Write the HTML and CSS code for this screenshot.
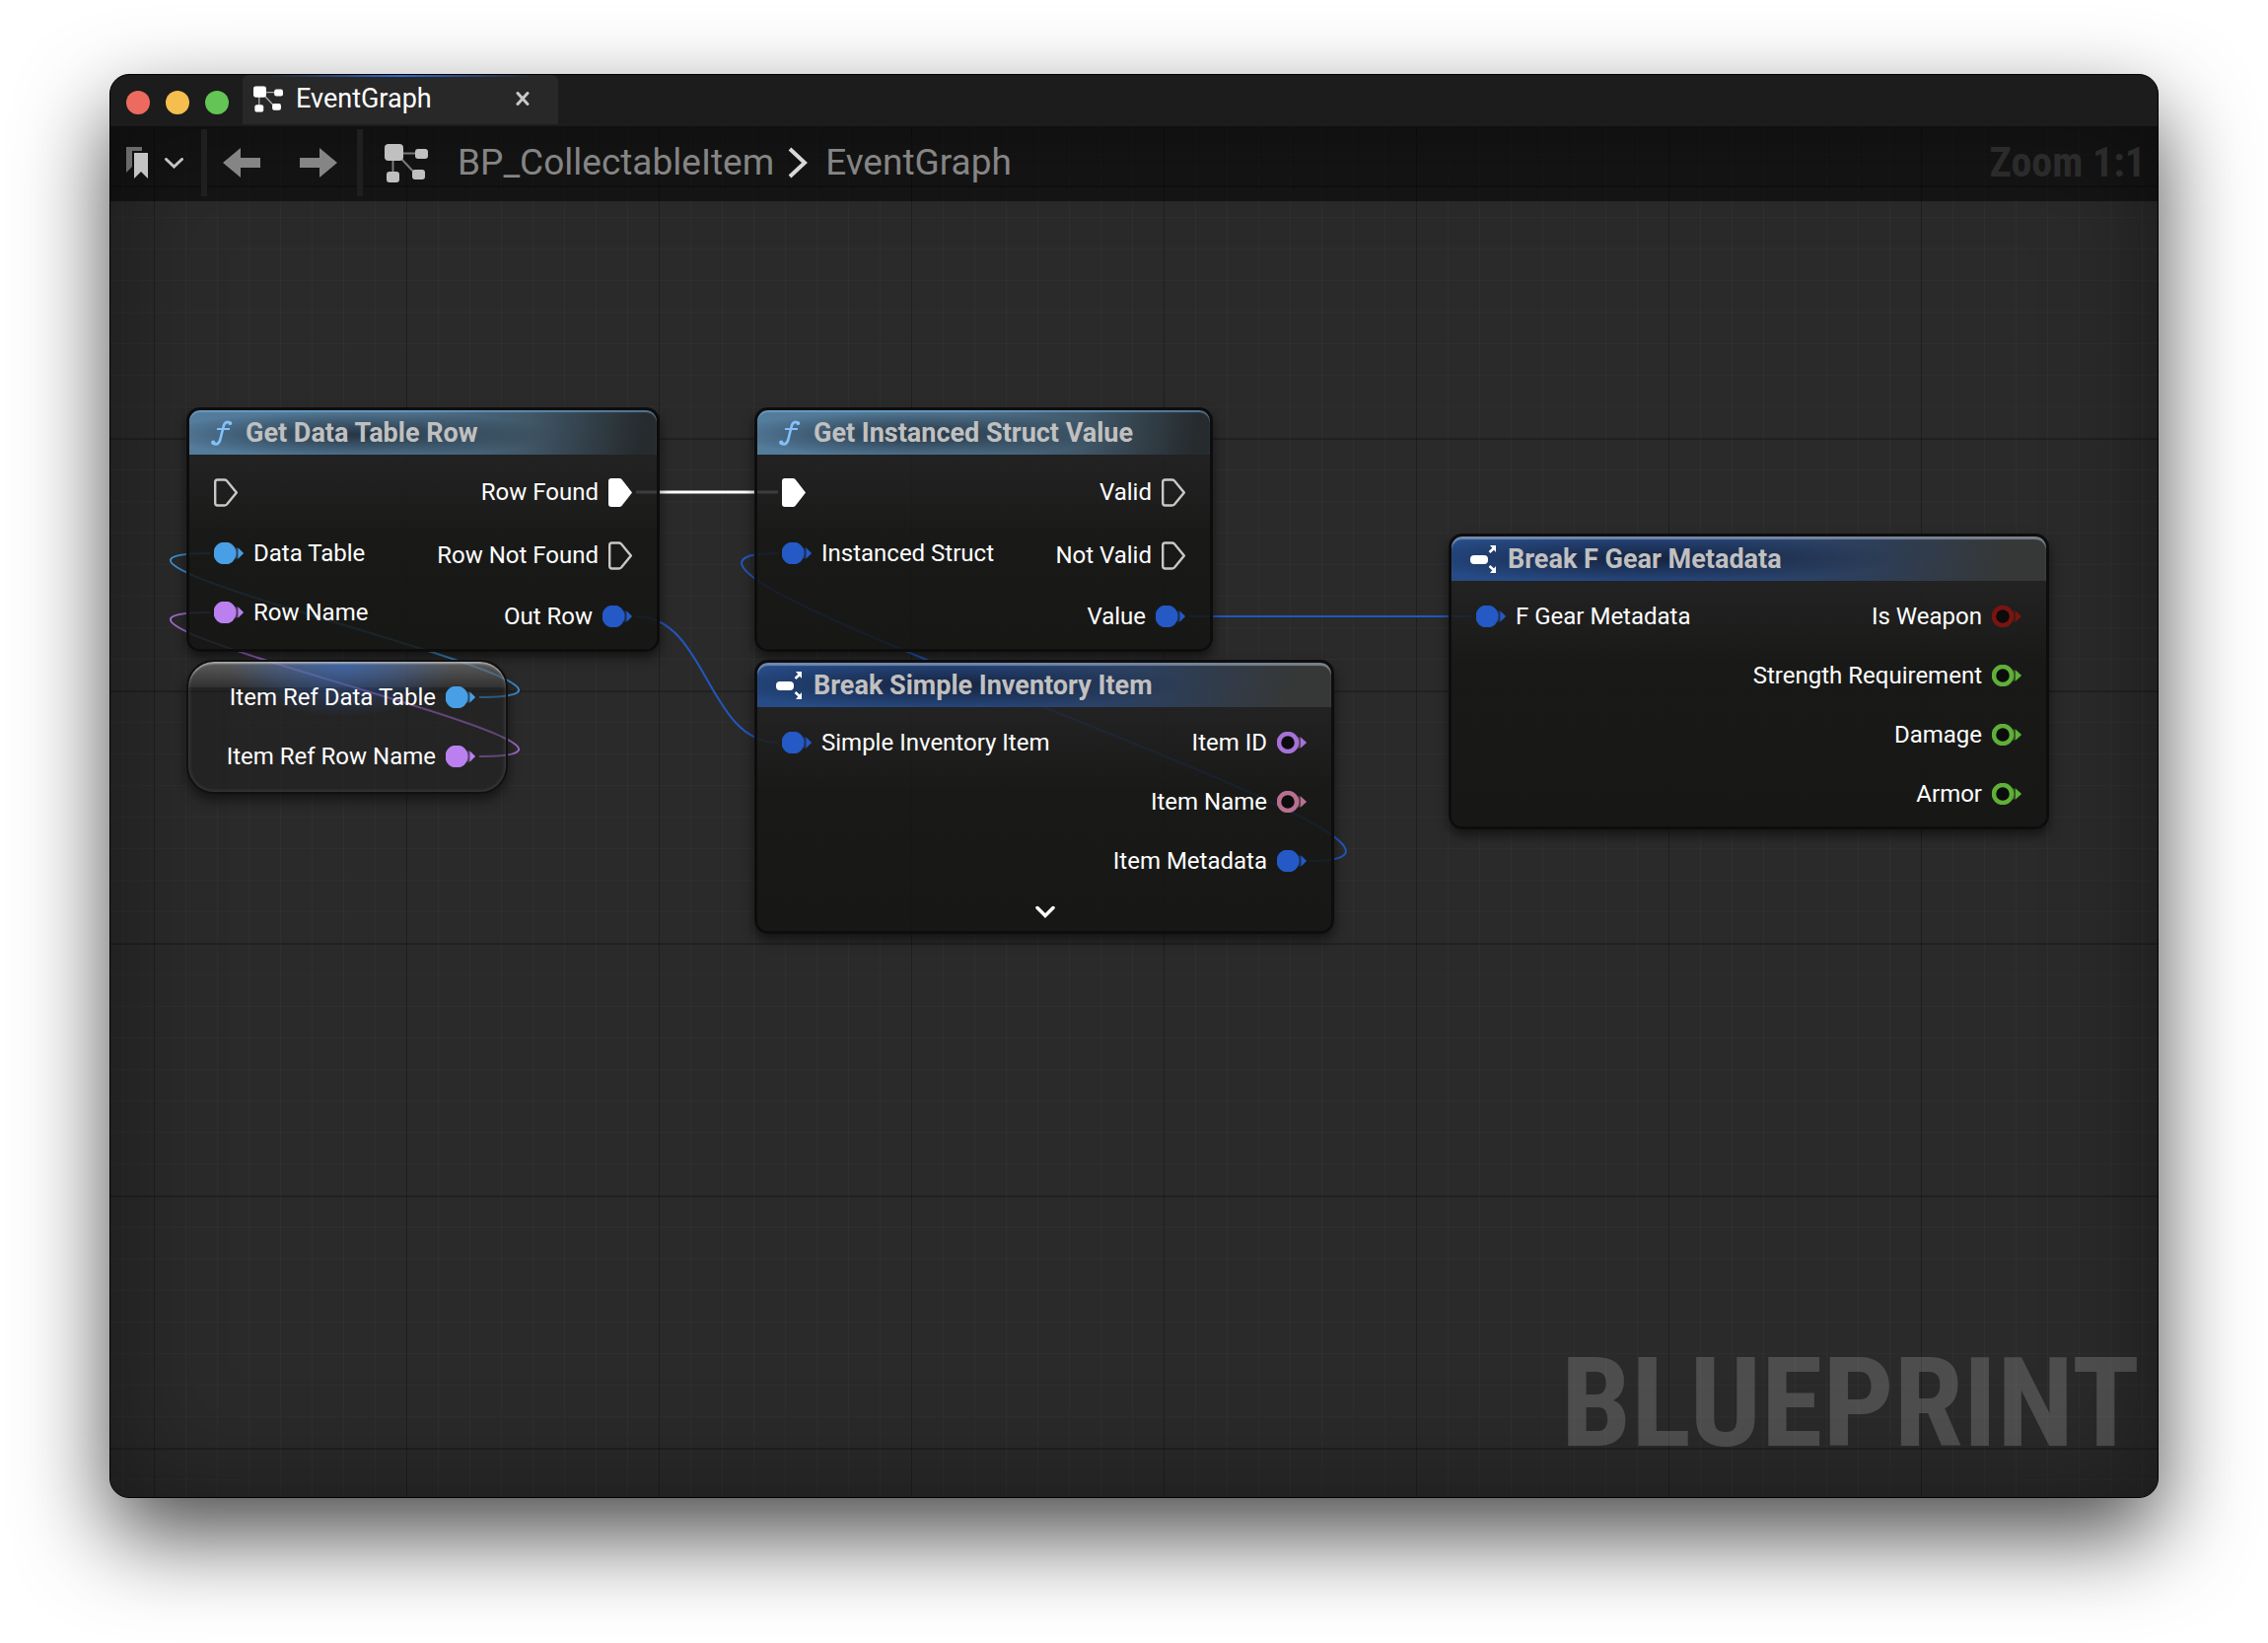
FILE: index.html
```
<!DOCTYPE html>
<html lang="en">
<head>
<meta charset="utf-8">
<meta name="viewport" content="width=device-width, initial-scale=1">
<title>EventGraph</title>
<link rel="stylesheet" href="styles.css">
</head>
<body>
<svg class="sprites" aria-hidden="true">
  <symbol id="graph" viewBox="0 0 44 39">
    <path d="M16 9.500H32M8.500 14V30M17 15L32 31" fill="none" stroke="currentColor" stroke-width="2" opacity=".6"/>
    <rect width="19" height="17" rx="4"/>
    <rect x="31" y="5" width="13" height="10" rx="3"/>
    <rect x="2" y="28" width="13" height="11" rx="3"/>
    <rect x="28" y="26" width="13" height="10" rx="3"/>
  </symbol>
  <symbol id="func" viewBox="0 0 22 26">
    <path d="M20 3.500C17 .5 13.500 2 12.500 7L9.500 19C8.500 24 5 26 2 23" fill="none" stroke="currentColor" stroke-width="2.600"/>
    <circle cx="19.300" cy="3.200" r="1.900"/>
    <circle cx="2.300" cy="22.800" r="2.200"/>
    <path d="M6 9H19" stroke="currentColor" stroke-width="2"/>
  </symbol>
  <symbol id="break" viewBox="0 0 28 28">
    <rect y="10" width="18" height="9" rx="4"/>
    <path d="M19.500 7L25 2M19.500 21L25 26" stroke="currentColor" stroke-width="2.500"/>
    <path d="M20 0H26V7ZM20 28H26V21Z"/>
  </symbol>
  <symbol id="exec-open" viewBox="0 0 24 29">
    <path d="M1.200 4Q1.200 1.500 3.500 1.500H10.500Q12 1.500 13 2.500L22.800 14.500L13 26.500Q12 27.500 10.500 27.500H3.500Q1.200 27.500 1.200 25Z" fill="none" stroke="currentColor" stroke-width="2.400"/>
  </symbol>
  <symbol id="exec-full" viewBox="0 0 24 29">
    <path d="M0 3Q0 0 3 0H11Q12.500 0 13.500 1L24 14.500L13.500 28Q12.500 29 11 29H3Q0 29 0 26Z"/>
  </symbol>
  <symbol id="data-full" viewBox="0 0 30 22">
    <circle cx="11" cy="11" r="11.500"/>
    <path d="M20 5.500H24.500L30 11L24.500 16.500H20Z" opacity=".35"/>
    <path d="M24.500 5.500L30 11L24.500 16.500Z"/>
  </symbol>
  <symbol id="data-open" viewBox="0 0 30 22">
    <circle cx="11" cy="11" r="9" fill="#0c0c0c" stroke="currentColor" stroke-width="4.500"/>
    <path d="M21 5.500H24L30 11L24 16.500H21Z" opacity=".4"/>
    <path d="M24 5.500L30 11L24 16.500Z"/>
  </symbol>
</svg>

<main class="window">
  <header class="titlebar">
    <div class="lights">
      <button class="light close-light" aria-label="Close window"></button>
      <button class="light min-light" aria-label="Minimize window"></button>
      <button class="light max-light" aria-label="Zoom window"></button>
    </div>
    <div class="tab">
      <svg class="tab-icon" viewBox="0 0 44 39"><use href="#graph"/></svg>
      <span class="tab-name">EventGraph</span>
      <button class="tab-close" aria-label="Close tab"><svg width="14" height="14" viewBox="0 0 14 14"><path d="M2 1.500L12 12.500M12 1.500L2 12.500" fill="none" stroke="currentColor" stroke-width="3" stroke-linecap="round"/></svg></button>
    </div>
  </header>

  <div class="workspace">
    <nav class="toolbar">
      <button class="tool bookmarks" aria-label="Bookmarks">
        <svg width="22" height="32" viewBox="0 0 22 32"><path d="M0 0H16V4H6V20L0 26Z" opacity=".5"/><path d="M8 6H22V32L15 25L8 32Z"/></svg>
        <svg width="19" height="11" viewBox="0 0 19 11"><path d="M1.500 1.500L9.500 9L17.500 1.500" fill="none" stroke="currentColor" stroke-width="3" stroke-linecap="round"/></svg>
      </button>
      <span class="divider"></span>
      <button class="tool arrow" aria-label="Back"><svg width="38" height="30" viewBox="0 0 38 30"><path d="M0 15L18 0V10H38V20H18V30Z"/></svg></button>
      <button class="tool arrow" aria-label="Forward"><svg width="38" height="30" viewBox="0 0 38 30"><path d="M38 15L20 0V10H0V20H20V30Z"/></svg></button>
      <span class="divider"></span>
      <svg class="crumb-icon" viewBox="0 0 44 39"><use href="#graph"/></svg>
      <a class="crumb" href="#bp">BP_CollectableItem</a>
      <svg class="crumb-sep" width="20" height="32" viewBox="0 0 20 32"><path d="M2 2L17 16L2 30" fill="none" stroke="currentColor" stroke-width="4"/></svg>
      <a class="crumb" href="#graph-root">EventGraph</a>
      <span class="zoom">Zoom 1:1</span>
    </nav>

    <div class="canvas">
      <svg class="wires" aria-hidden="true">
        <g transform="translate(-112 -204)">
          <path class="w-exec" d="M645 499H789"/>
          <path class="w-struct" d="M645 625C717 625 717 753 789 753"/>
          <path class="w-struct" d="M1206 625H1492"/>
          <path class="w-struct" d="M1328 873C1568 873 549 561 789 561"/>
          <path class="w-object" d="M486 707C696 707 3 561 213 561"/>
          <path class="w-name" d="M486 767C696 767 3 621 213 621"/>
        </g>
      </svg>

      <section class="node func get-row">
        <h2 class="head"><svg class="func-icon"><use href="#func"/></svg>Get Data Table Row</h2>
        <div class="body">
          <ul class="pins in">
            <li class="pin exec"><svg><use href="#exec-open"/></svg></li>
            <li class="pin data object"><svg><use href="#data-full"/></svg>Data Table</li>
            <li class="pin data name"><svg><use href="#data-full"/></svg>Row Name</li>
          </ul>
          <ul class="pins out">
            <li class="pin exec on">Row Found<svg><use href="#exec-full"/></svg></li>
            <li class="pin exec">Row Not Found<svg><use href="#exec-open"/></svg></li>
            <li class="pin data struct">Out Row<svg><use href="#data-full"/></svg></li>
          </ul>
        </div>
      </section>

      <section class="node func get-struct">
        <h2 class="head"><svg class="func-icon"><use href="#func"/></svg>Get Instanced Struct Value</h2>
        <div class="body">
          <ul class="pins in">
            <li class="pin exec on"><svg><use href="#exec-full"/></svg></li>
            <li class="pin data struct"><svg><use href="#data-full"/></svg>Instanced Struct</li>
          </ul>
          <ul class="pins out">
            <li class="pin exec">Valid<svg><use href="#exec-open"/></svg></li>
            <li class="pin exec">Not Valid<svg><use href="#exec-open"/></svg></li>
            <li class="pin data struct">Value<svg><use href="#data-full"/></svg></li>
          </ul>
        </div>
      </section>

      <section class="node split break-item">
        <h2 class="head"><svg class="break-icon"><use href="#break"/></svg>Break Simple Inventory Item</h2>
        <div class="body">
          <ul class="pins in">
            <li class="pin data struct"><svg><use href="#data-full"/></svg>Simple Inventory Item</li>
          </ul>
          <ul class="pins out">
            <li class="pin data name open">Item ID<svg><use href="#data-open"/></svg></li>
            <li class="pin data text">Item Name<svg><use href="#data-open"/></svg></li>
            <li class="pin data struct">Item Metadata<svg><use href="#data-full"/></svg></li>
          </ul>
        </div>
        <button class="expand" aria-label="Show more pins"><svg width="20" height="14" viewBox="0 0 20 14"><path d="M2 2.500L10 10.500L18 2.500" fill="none" stroke="currentColor" stroke-width="3.500" stroke-linecap="round"/></svg></button>
      </section>

      <section class="node split break-gear">
        <h2 class="head"><svg class="break-icon"><use href="#break"/></svg>Break F Gear Metadata</h2>
        <div class="body">
          <ul class="pins in">
            <li class="pin data struct"><svg><use href="#data-full"/></svg>F Gear Metadata</li>
          </ul>
          <ul class="pins out">
            <li class="pin data bool">Is Weapon<svg><use href="#data-open"/></svg></li>
            <li class="pin data float">Strength Requirement<svg><use href="#data-open"/></svg></li>
            <li class="pin data float">Damage<svg><use href="#data-open"/></svg></li>
            <li class="pin data float">Armor<svg><use href="#data-open"/></svg></li>
          </ul>
        </div>
      </section>

      <section class="getter">
        <ul class="pins out">
          <li class="pin data object">Item Ref Data Table<svg><use href="#data-full"/></svg></li>
          <li class="pin data name">Item Ref Row Name<svg><use href="#data-full"/></svg></li>
        </ul>
      </section>

      <div class="watermark">BLUEPRINT</div>
    </div>
  </div>
</main>
</body>
</html>
```
FILE: styles.css
```
* { box-sizing: border-box; }

body {
  margin: 0;
  min-height: 100vh;
  padding: 75px 111px 147px;
  display: flex;
  background: #fff;
  color: #fff;
  font-family: Roboto, "Liberation Sans", sans-serif;
  font-size: 24px;
}

svg { display: block; flex: none; fill: currentColor; }
button { margin: 0; padding: 0; border: 0; background: none; color: inherit; font: inherit; }
ul { margin: 0; padding: 0; list-style: none; }
.sprites { position: absolute; width: 0; height: 0; }

.window {
  flex: 1;
  min-width: 0;
  display: flex;
  flex-direction: column;
  overflow: hidden;
  border: 1px solid #000;
  border-radius: 20px;
  background: #1c1c1c;
  box-shadow: 0 38px 90px rgba(0, 0, 0, .7);
}

/* Title bar */
.titlebar { display: flex; align-items: flex-start; height: 52px; padding-left: 16px; }
.lights { display: flex; gap: 16px; padding-top: 16px; margin-right: 14px; }
.light { width: 24px; height: 24px; border-radius: 50%; }
.close-light { background: #ed6a5f; }
.min-light { background: #f5be4f; }
.max-light { background: #62c554; }

.tab {
  display: flex;
  align-items: center;
  width: 320px;
  height: 50px;
  padding: 0 29px 2px 11px;
  border-radius: 6px 6px 0 0;
  background: linear-gradient(90deg, transparent 8%, #2a6bd0 50%, transparent 92%) top / 100% 2px no-repeat, #282828;
}
.tab-icon { width: 30px; height: 27px; margin-right: 13px; }
.tab-name { flex: 1; font-size: 27px; line-height: 32px; }
.tab-close { color: #c8c8c8; }

/* Graph workspace */
.workspace {
  flex: 1;
  display: flex;
  flex-direction: column;
  background:
    linear-gradient(90deg, rgba(0, 0, 0, .35) 1px, transparent 1px) 44px 0 / 256px 256px,
    linear-gradient(rgba(0, 0, 0, .25) 2px, transparent 2px) 0 60px / 256px 256px,
    linear-gradient(90deg, rgba(255, 255, 255, .025) 1px, transparent 1px) 12px 0 / 32px 32px,
    linear-gradient(rgba(255, 255, 255, .02) 1px, transparent 1px) 0 28px / 32px 32px,
    #2a2a2a;
  box-shadow: inset 0 0 110px rgba(0, 0, 0, .4);
}

.toolbar {
  display: flex;
  align-items: center;
  height: 76px;
  padding: 0 12px 2px 16px;
  background: rgba(0, 0, 0, .5);
}
.tool { display: flex; align-items: center; color: #858585; }
.bookmarks { gap: 17px; margin-right: 18px; color: #c4c4c4; }
.divider { width: 6px; height: 68px; background: #1f1f1f; }
.arrow { margin-left: 16px; }
.arrow + .arrow { margin: 0 20px 0 40px; }
.crumb-icon { width: 44px; height: 39px; margin: 0 30px 0 22px; color: #c0c0c0; }
.crumb { color: #858585; font-size: 37px; line-height: 44px; text-decoration: none; }
.crumb-sep { margin: 0 18px 0 14px; color: #d8d8d8; }
.zoom { margin-left: auto; color: #2b2b2b; font-family: "Roboto Condensed", Roboto, sans-serif; font-size: 42px; font-weight: 700; line-height: 44px; }

.canvas { position: relative; flex: 1; min-height: 800px; display: flex; align-items: flex-end; justify-content: flex-end; padding: 0 18px 31px; }
.watermark { color: rgba(255, 255, 255, .17); font-family: "Roboto Condensed", Roboto, sans-serif; font-size: 127px; font-weight: 700; line-height: 128px; }

.wires { position: absolute; inset: 0; width: 100%; height: 100%; fill: none; }
.wires path { fill: none; stroke-width: 2; }
.wires .w-exec { stroke: #fff; stroke-width: 3; }
.wires .w-struct { stroke: #2257bd; }
.wires .w-object { stroke: #3b8ac8; }
.wires .w-name { stroke: #9c68c8; }

/* Nodes */
.node {
  position: absolute;
  border: 3px solid #0d0d0d;
  border-radius: 14px;
  padding-bottom: 3px;
  background: linear-gradient(rgba(33, 33, 33, .85) 45px, rgba(22, 23, 21, .87) 130px, rgba(20, 21, 19, .87)) padding-box;
  box-shadow: 0 6px 12px rgba(0, 0, 0, .5);
}
.get-row { left: 77px; top: 209px; width: 480px; }
.get-struct { left: 653px; top: 209px; width: 465px; }
.break-item { left: 653px; top: 465px; width: 588px; padding-bottom: 0; }
.break-gear { left: 1357px; top: 337px; width: 609px; }

.head {
  display: flex;
  align-items: center;
  height: 45px;
  margin: 0;
  border-radius: 11px 11px 0 0;
  color: #c0c0c0;
  font-size: 27px;
  font-weight: 700;
  line-height: 32px;
  white-space: nowrap;
}
.func .head {
  padding-left: 22px;
  background:
    radial-gradient(ellipse 42% 52% at 36% 55%, rgba(30, 42, 54, .85), transparent),
    linear-gradient(100deg, #547c9c 0%, #50748f 45%, #405768 72%, #262b2e 96%);
  box-shadow: inset 0 2px 1px rgba(120, 180, 230, .55);
}
.split .head {
  padding-left: 19px;
  background:
    radial-gradient(ellipse 42% 55% at 33% 50%, rgba(18, 28, 50, .85), transparent),
    linear-gradient(100deg, #264b86 0%, #284980 40%, #2c3f5c 68%, #363838 92%);
  box-shadow: inset 0 3px 1px rgba(190, 200, 220, .5);
}
.func-icon { width: 22px; height: 26px; margin-right: 13px; color: #84c1f8; }
.break-icon { width: 28px; height: 28px; margin-right: 10px; color: #fff; }

.body { display: flex; justify-content: space-between; padding: 6px 25px 0; }
.pin { display: flex; align-items: center; gap: 10px; line-height: 28px; white-space: nowrap; }
.out .pin { justify-content: flex-end; }
.exec { height: 64px; }
.data { height: 60px; }
.exec svg { width: 24px; height: 29px; color: #c8c8c8; }
.exec.on svg { color: #fff; }
.data svg { width: 30px; height: 22px; }
.object svg { color: #489fe6; }
.name svg { color: #bb80f0; }
.name.open svg { color: #a572d6; }
.struct svg { color: #2459c6; }
.text svg { color: #b87090; }
.bool svg { color: #7a1410; }
.float svg { color: #5fb038; }
.expand { display: flex; align-items: center; justify-content: center; width: 100%; height: 41px; padding: 2px 0 0 2px; }

.getter {
  position: absolute;
  left: 77px;
  top: 465px;
  width: 326px;
  padding: 6px 31px 6px 0;
  border: 2px solid #101010;
  border-radius: 28px;
  background:
    radial-gradient(ellipse 36% 56px at 48% 0, rgba(50, 110, 215, .6), transparent) 0 0 / 100% 54px no-repeat padding-box,
    linear-gradient(rgba(150, 150, 150, .5), rgba(90, 90, 90, .25)) 0 0 / 100% 26px no-repeat padding-box,
    rgba(28, 28, 28, .45) padding-box;
  box-shadow: inset 0 3px 2px -1px rgba(220, 220, 220, .6), inset 0 0 3px 2px rgba(120, 120, 120, .2), 0 6px 12px rgba(0, 0, 0, .5);
}
```
